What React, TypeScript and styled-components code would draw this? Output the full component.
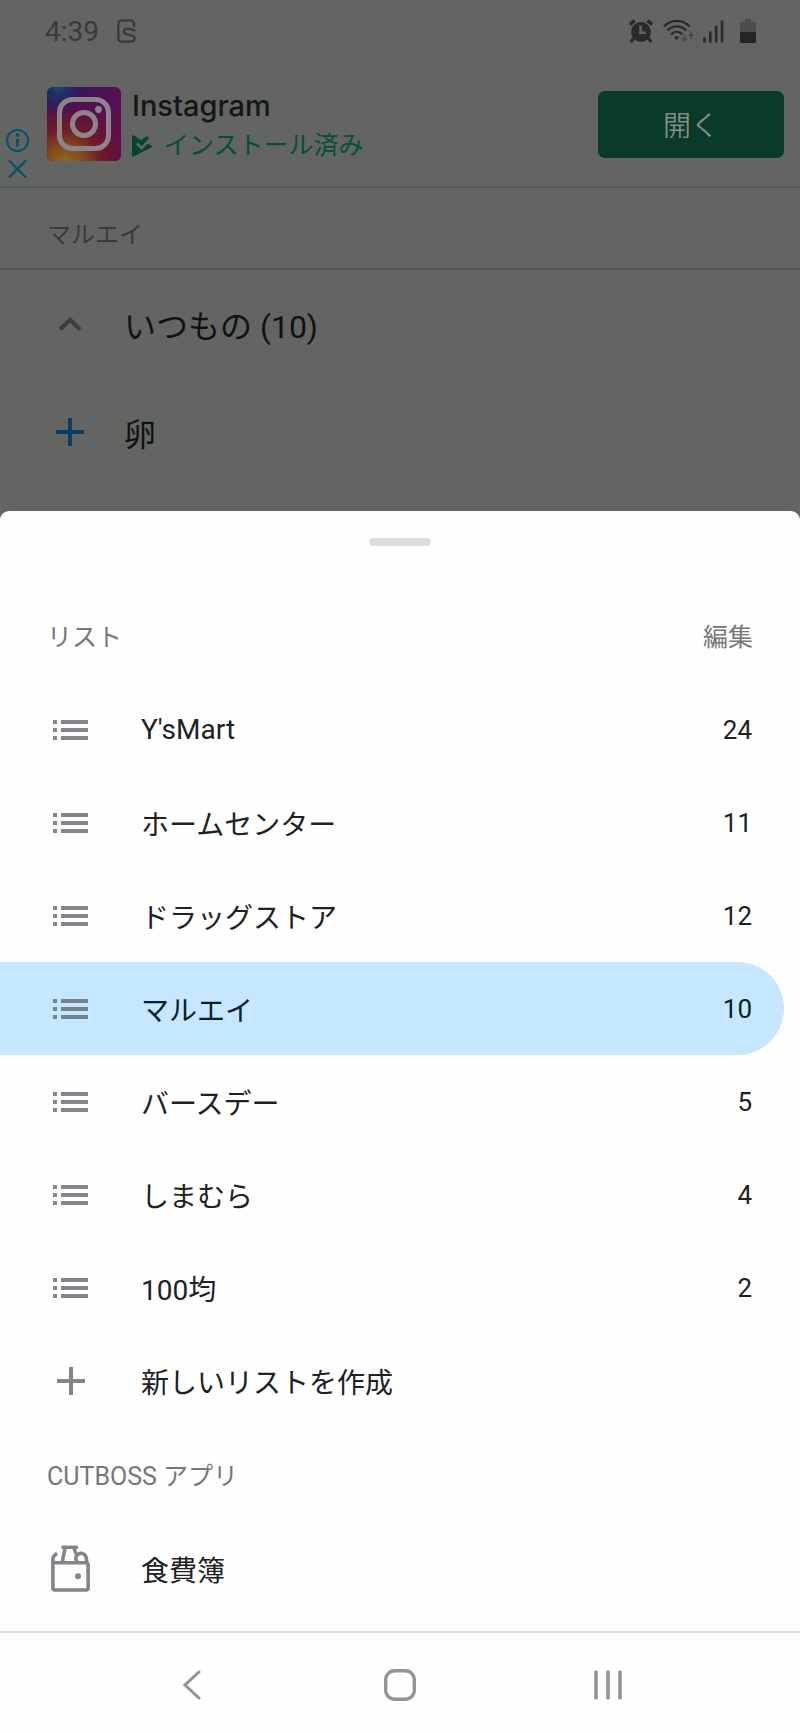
import React from "react";
import styled, { createGlobalStyle, css } from "styled-components";

const GlobalStyle = createGlobalStyle`
  *, *::before, *::after { box-sizing: border-box; }
  body { margin: 0; background: #636562; }
  body, button { font-family: Roboto, "Noto Sans CJK JP", sans-serif; }
  h1, h2, h3, p, ul { margin: 0; padding: 0; font-weight: 400; }
  ul { list-style: none; }
  button { border: 0; padding: 0; background: none; color: inherit; text-align: left; cursor: pointer; }
  svg { display: block; flex: none; }
`;

const Screen = styled.div`
  display: flex;
  flex-direction: column;
  min-height: 100vh;
  background: #636562;
`;

const StatusBar = styled.header`
  display: flex;
  align-items: center;
  justify-content: space-between;
  height: 62px;
  padding: 0 44px 0 45px;
  color: #3a3b3a;
  font-size: 28px;
`;

const StatusGroup = styled.div<{ $gap: number }>`
  display: flex;
  align-items: center;
  gap: ${(p) => p.$gap}px;
`;

const AdBanner = styled.section`
  display: flex;
  align-items: center;
  height: 126px;
  padding: 0 16px 0 6px;
  border-bottom: 2px solid #5a585a;
`;

const AdControls = styled.div`
  display: flex;
  flex-direction: column;
  align-self: flex-end;
  gap: 8px;
  width: 41px;
  padding-bottom: 8px;
`;

const AdText = styled.div`
  display: flex;
  flex: 1;
  flex-direction: column;
  gap: 4px;
  margin-left: 11px;
  padding-top: 4px;
`;

const AdTitle = styled.h1`
  color: #151618;
  font-family: Inter, sans-serif;
  font-size: 29px;
  font-weight: 500;
  line-height: 36px;
`;

const AdStatus = styled.p`
  display: flex;
  align-items: center;
  gap: 11px;
  color: #054f3a;
  font-size: 25px;
  line-height: 36px;
`;

const OpenButton = styled.button`
  width: 186px;
  height: 67px;
  border-radius: 7px;
  background: #093a2a;
  color: #848c88;
  font-size: 28px;
  font-weight: 350;
  text-align: center;
`;

const StoreName = styled.h2`
  height: 82px;
  padding: 0 47px;
  border-bottom: 2px solid #565856;
  color: #363736;
  font-size: 24px;
  font-weight: 350;
  line-height: 94px;
`;

const ItemList = styled.ul`
  padding-bottom: 25px;
`;

const ItemRow = styled.button`
  display: flex;
  align-items: center;
  gap: 31px;
  width: 100%;
  height: 108px;
  padding: 0 46px;
  color: #111211;
  font-size: 32px;
`;

const Sheet = styled.main`
  display: flex;
  flex: 1;
  flex-direction: column;
  border-radius: 9px 9px 0 0;
  background: #fefefe;
`;

const Handle = styled.div`
  width: 62px;
  height: 8px;
  margin: 27px auto 44px;
  border-radius: 4px;
  background: #dededf;
`;

const SectionHead = styled.div`
  display: flex;
  align-items: center;
  justify-content: space-between;
  height: 93px;
  padding: 0 47px 4px;
  color: #777777;
  font-size: 25px;
  font-weight: 400;
`;

const SectionTitle = styled.h3`
  font-size: inherit;
  font-weight: inherit;
`;

const EditButton = styled.button`
  font-size: inherit;
  font-weight: inherit;
`;

const Rows = styled.ul`
  padding-bottom: 2px;
`;

const SheetRow = styled.button<{ $selected?: boolean }>`
  display: flex;
  align-items: center;
  width: calc(100% - 16px);
  height: 93px;
  padding: 0 32px 0 47px;
  border-radius: 0 47px 47px 0;
  color: #202124;
  font-size: 28px;
  ${(p) =>
    p.$selected &&
    css`
      background: #c5e7ff;
      color: #0b1d29;
    `}
`;

const IconBox = styled.span<{ $color: string }>`
  display: flex;
  justify-content: center;
  width: 47px;
  color: ${(p) => p.$color};
`;

const RowLabel = styled.span`
  flex: 1;
  margin-left: 47px;
`;

const Count = styled.span`
  font-size: 26px;
`;

const NavBar = styled.nav`
  display: grid;
  grid-template-columns: repeat(3, 1fr);
  align-items: center;
  height: 102px;
  margin-top: auto;
  padding: 4px 11% 0;
  border-top: 2px solid #dedede;
  color: #949494;
`;

const NavButton = styled.button`
  display: flex;
  align-items: center;
  justify-content: center;
  height: 100%;
`;

const SamsungIcon = () => (
  <svg width="20" height="24" viewBox="0 0 20 24" fill="none" stroke="currentColor" strokeWidth="2.4" strokeLinecap="round">
    <path d="M17 7V5q0-3.600-3.600-3.600H5Q1.400 1.400 1.400 5v14q0 3.600 3.600 3.600h8.500c5 0 5.500-5.300 1-6.200l-5-1.200c-4-1-3.200-5.400.8-5.600 2.700-.1 4.200.6 7.200 1.800" />
  </svg>
);

const AlarmIcon = () => (
  <svg width="26" height="25" viewBox="0 0 26 25" fill="none" stroke="#292a29">
    <circle cx="13" cy="13" r="10" fill="#292a29" stroke="none" />
    <path d="M2 5.500l4.500-4M24 5.500l-4.500-4" strokeWidth="3.600" />
    <path d="M6 19l-3.200 4M20 19l3.200 4" strokeWidth="3" />
    <path d="M12.500 6.500v7.300H18" stroke="#636562" strokeWidth="2.600" />
  </svg>
);

const WifiIcon = () => (
  <svg width="31" height="25" viewBox="0 0 31 25" fill="none" stroke="#292a29" strokeWidth="2.400">
    <path d="M1 7.500c7-7.500 18.500-7.500 25.500 0M4.500 11.500c5-5.500 13.500-5.500 18.500 0M8.200 15.300c3.300-3.200 7.800-3.200 11 0" />
    <circle cx="13.700" cy="18.800" r="1.900" fill="#292a29" stroke="none" />
    <path d="M21.500 15v6M28 20v-5" stroke="#4a4b4a" strokeWidth="2" />
    <path d="M18 19h7l-3.500 4.500zM25 17h6l-3-4.500z" fill="#4a4b4a" stroke="none" />
  </svg>
);

const SignalIcon = () => (
  <svg width="21" height="23" viewBox="0 0 21 23" stroke="#292a29" strokeWidth="2.600" strokeLinecap="round">
    <path d="M1.500 18.500v3M7.300 12.500v9M13.200 6.500v15M19.100 1.500v20" />
  </svg>
);

const BatteryIcon = () => (
  <svg width="23" height="24" viewBox="-7 0 23 24">
    <path d="M5 0h6v3h3.500Q16 3 16 4.500V13H0V4.500Q0 3 1.500 3H5z" fill="#4c4d4c" />
    <path d="M0 13h16v9.500q0 1.500-1.500 1.500h-13Q0 24 0 22.500z" fill="#242524" />
  </svg>
);

const InfoIcon = () => (
  <svg width="23" height="23" viewBox="0 0 23 23" fill="none" stroke="#06536a" strokeWidth="2">
    <circle cx="11.500" cy="11.500" r="10.500" />
    <path d="M11.500 9.500v8" strokeWidth="3" />
    <circle cx="11.500" cy="6" r="1.900" fill="#06536a" stroke="none" />
  </svg>
);

const CloseIcon = () => (
  <svg width="23" height="18" viewBox="0 0 23 18" stroke="#06536a" strokeWidth="2.400">
    <path d="M3 .5l17 17M20 .5l-17 17" />
  </svg>
);

const InstagramLogo = () => (
  <svg width="74" height="74" viewBox="0 0 74 74" role="img" aria-label="Instagram">
    <defs>
      <linearGradient id="base" x1="0" y1="0" x2="1" y2="0.300">
        <stop offset="0" stopColor="#22175c" />
        <stop offset="0.450" stopColor="#41125c" />
        <stop offset="1" stopColor="#5a0f50" />
      </linearGradient>
      <radialGradient id="warm" cx="0.250" cy="1.050" r="1">
        <stop offset="0" stopColor="#8f7026" />
        <stop offset="0.220" stopColor="#85501c" />
        <stop offset="0.480" stopColor="#701c24" />
        <stop offset="0.740" stopColor="#651040" stopOpacity="0.800" />
        <stop offset="1" stopColor="#5a0f50" stopOpacity="0" />
      </radialGradient>
      <radialGradient id="cool" cx="0.150" cy="0" r="0.400">
        <stop offset="0" stopColor="#164a72" />
        <stop offset="1" stopColor="#22175c" stopOpacity="0" />
      </radialGradient>
    </defs>
    <rect width="74" height="74" rx="6" fill="url(#base)" />
    <rect width="74" height="74" rx="6" fill="url(#warm)" />
    <rect width="74" height="74" rx="6" fill="url(#cool)" />
    <g fill="none" stroke="#8b858b" strokeWidth="5">
      <rect x="12.500" y="12.500" width="49" height="49" rx="13" />
      <circle cx="37" cy="37" r="11.500" />
    </g>
    <circle cx="51.500" cy="22.500" r="3.400" fill="#8b858b" />
  </svg>
);

const InstalledIcon = () => (
  <svg width="21" height="22" viewBox="0 0 21 22">
    <path d="M1.500.3Q0 0 0 1.500v19Q0 22 1.500 21.500L19.500 12.200Q20.500 11.300 19.500 10.400L16 8.500 9.500 15 4 9.500l2-2 3.500 3.500L16 4.500 13 2 9 5z" fill="#06442f" />
    <path d="M5.500 8.500l4 4L17 4.500" fill="none" stroke="#636562" strokeWidth="1.800" />
    <path d="M7 6.500l2.500 2.500L16 2" fill="none" stroke="#06442f" strokeWidth="3" />
  </svg>
);

const ChevronUpIcon = () => (
  <svg width="24" height="16" viewBox="0 0 24 16" fill="none" stroke="currentColor" strokeWidth="4">
    <path d="M2 13.500l10-10 10 10" />
  </svg>
);

const PlusIcon = () => (
  <svg width="28" height="28" viewBox="0 0 28 28" stroke="currentColor" strokeWidth="4">
    <path d="M14 0v28M0 14h28" />
  </svg>
);

const ListIcon = () => (
  <svg width="35" height="20" viewBox="0 0 35 20" fill="currentColor">
    <path d="M0 0h4v4H0zM8 0h27v4H8zM0 8h4v4H0zM8 8h27v4H8zM0 16h4v4H0zM8 16h27v4H8z" />
  </svg>
);

const GroceryIcon = () => (
  <svg width="39" height="47" viewBox="0 0 39 47" fill="none" stroke="currentColor" strokeWidth="3.600">
    <rect x="1.900" y="17.800" width="35.200" height="27.200" rx="2" />
    <path d="M1.900 19v-4.500q0-4 4.200-6" />
    <path d="M11.500 18C11.500 9 14 10 13.800 2M23.200 2c0 5 1.800 5 2 7.500" />
    <path d="M12 2.200h13.500" strokeLinecap="round" />
    <path d="M26 17.500c-5-10 9-13 9.500-3V18" />
    <circle cx="27" cy="31.300" r="3" fill="currentColor" stroke="none" />
  </svg>
);

const BackIcon = () => (
  <svg width="18" height="30" viewBox="0 0 18 30" fill="none" stroke="currentColor" strokeWidth="3" strokeLinecap="round">
    <path d="M16 2L2 15l14 13" />
  </svg>
);

const HomeIcon = () => (
  <svg width="32" height="32" viewBox="0 0 32 32" fill="none" stroke="currentColor" strokeWidth="3.400">
    <rect x="1.700" y="1.700" width="28.600" height="28.600" rx="9" />
  </svg>
);

const RecentsIcon = () => (
  <svg width="28" height="30" viewBox="0 0 28 30" stroke="currentColor" strokeWidth="3.600" strokeLinecap="round">
    <path d="M2 2v26M14 2v26M26 2v26" />
  </svg>
);

const lists = [
  { name: "Y'sMart", count: 24 },
  { name: "ホームセンター", count: 11 },
  { name: "ドラッグストア", count: 12 },
  { name: "マルエイ", count: 10, selected: true },
  { name: "バースデー", count: 5 },
  { name: "しまむら", count: 4 },
  { name: "100均", count: 2 },
];

const iconGray = "#83858a";

export default function App() {
  return (
    <Screen>
      <GlobalStyle />
      <StatusBar>
        <StatusGroup $gap={18}>
          <span>4:39</span>
          <SamsungIcon />
        </StatusGroup>
        <StatusGroup $gap={9}>
          <AlarmIcon />
          <WifiIcon />
          <SignalIcon />
          <BatteryIcon />
        </StatusGroup>
      </StatusBar>

      <AdBanner>
        <AdControls>
          <button aria-label="広告情報">
            <InfoIcon />
          </button>
          <button aria-label="閉じる">
            <CloseIcon />
          </button>
        </AdControls>
        <InstagramLogo />
        <AdText>
          <AdTitle>Instagram</AdTitle>
          <AdStatus>
            <InstalledIcon />
            インストール済み
          </AdStatus>
        </AdText>
        <OpenButton>開く</OpenButton>
      </AdBanner>

      <StoreName>マルエイ</StoreName>
      <ItemList>
        <li>
          <ItemRow aria-expanded="true">
            <IconBox $color="#3b3c3f">
              <ChevronUpIcon />
            </IconBox>
            いつもの (10)
          </ItemRow>
        </li>
        <li>
          <ItemRow>
            <IconBox $color="#073f62">
              <PlusIcon />
            </IconBox>
            卵
          </ItemRow>
        </li>
      </ItemList>

      <Sheet>
        <Handle />
        <SectionHead>
          <SectionTitle>リスト</SectionTitle>
          <EditButton>編集</EditButton>
        </SectionHead>
        <Rows>
          {lists.map((list) => (
            <li key={list.name}>
              <SheetRow $selected={list.selected} aria-current={list.selected}>
                <IconBox $color={list.selected ? "#75848f" : iconGray}>
                  <ListIcon />
                </IconBox>
                <RowLabel>{list.name}</RowLabel>
                <Count>{list.count}</Count>
              </SheetRow>
            </li>
          ))}
          <li>
            <SheetRow>
              <IconBox $color={iconGray}>
                <PlusIcon />
              </IconBox>
              <RowLabel>新しいリストを作成</RowLabel>
            </SheetRow>
          </li>
        </Rows>
        <SectionHead>
          <SectionTitle>CUTBOSS アプリ</SectionTitle>
        </SectionHead>
        <SheetRow>
          <IconBox $color={iconGray}>
            <GroceryIcon />
          </IconBox>
          <RowLabel>食費簿</RowLabel>
        </SheetRow>
        <NavBar>
          <NavButton aria-label="戻る">
            <BackIcon />
          </NavButton>
          <NavButton aria-label="ホーム">
            <HomeIcon />
          </NavButton>
          <NavButton aria-label="履歴">
            <RecentsIcon />
          </NavButton>
        </NavBar>
      </Sheet>
    </Screen>
  );
}
